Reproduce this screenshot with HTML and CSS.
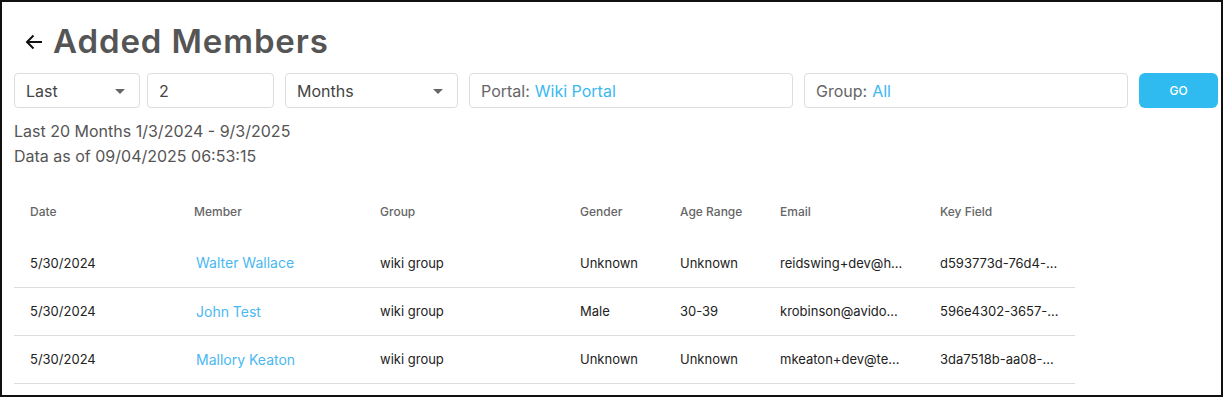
FILE: index.html
```html
<!DOCTYPE html>
<html lang="en">
<head>
  <meta charset="UTF-8">
  <title>Added Members</title>
  <link rel="stylesheet" href="styles.css">
</head>
<body>
  <div class="page">
    <!-- HEADER -->
    <div class="page-header">
      <a class="back" href="#">
        <svg width="18" height="16" viewBox="0 0 18 16"><path d="M17 8H2M8.5 1.5L2 8l6.5 6.5" fill="none" stroke="#111" stroke-width="2"/></svg>
      </a>
      <h1>Added Members</h1>
    </div>

    <!-- FILTERS -->
    <div class="filters">
      <div class="field select w-last">Last <span class="caret"></span></div>
      <div class="field w-num">2</div>
      <div class="field select w-unit">Months <span class="caret"></span></div>
      <div class="field w-wide"><span class="label">Portal:</span> <span class="value">Wiki Portal</span></div>
      <div class="field w-wide"><span class="label">Group:</span> <span class="value">All</span></div>
      <button class="go">GO</button>
    </div>

    <div class="summary">
      <div>Last 20 Months 1/3/2024 - 9/3/2025</div>
      <div>Data as of 09/04/2025 06:53:15</div>
    </div>

    <!-- TABLE -->
    <table class="members">
      <thead>
        <tr>
          <th class="c-date">Date</th>
          <th class="c-member">Member</th>
          <th class="c-group">Group</th>
          <th class="c-gender">Gender</th>
          <th class="c-age">Age Range</th>
          <th class="c-email">Email</th>
          <th class="c-key">Key Field</th>
        </tr>
      </thead>
      <tbody>
        <tr>
          <td>5/30/2024</td>
          <td><a href="#">Walter Wallace</a></td>
          <td>wiki group</td>
          <td>Unknown</td>
          <td>Unknown</td>
          <td>reidswing+dev@h...</td>
          <td>d593773d-76d4-...</td>
        </tr>
        <tr>
          <td>5/30/2024</td>
          <td><a href="#">John Test</a></td>
          <td>wiki group</td>
          <td>Male</td>
          <td>30-39</td>
          <td>krobinson@avido...</td>
          <td>596e4302-3657-...</td>
        </tr>
        <tr>
          <td>5/30/2024</td>
          <td><a href="#">Mallory Keaton</a></td>
          <td>wiki group</td>
          <td>Unknown</td>
          <td>Unknown</td>
          <td>mkeaton+dev@te...</td>
          <td>3da7518b-aa08-...</td>
        </tr>
      </tbody>
    </table>
  </div>
</body>
</html>
```

FILE: styles.css
```css
* {
  box-sizing: border-box;
}
body {
  margin: 0;
  font-family: Inter, "Noto Sans", sans-serif;
  color: #555;
  background: #fff;
}
.page {
  width: 1223px;
  height: 397px;
  border: 2px solid #111;
  padding: 0 0 0 12px;
  overflow: hidden;
}

/* HEADER */
.page-header {
  display: flex;
  align-items: center;
  gap: 10px;
  padding: 18px 0 0 11px;
  height: 60px;
}
.back {
  display: flex;
  margin-top: 2px;
}
.page-header h1 {
  margin: 0;
  font-size: 33px;
  font-weight: 600;
  color: #555;
  letter-spacing: 0.9px;
}

/* FILTERS */
.filters {
  display: flex;
  gap: 11px;
  margin-top: 11px;
  height: 35px;
}
.field {
  display: flex;
  align-items: center;
  border: 1px solid #ddd;
  border-radius: 4px;
  padding: 0 11px;
  font-size: 16px;
  color: #444;
  position: relative;
}
.field .label {
  color: #666;
  margin-right: 5px;
}
.field .value {
  color: #3ab8ef;
}
.w-last { width: 126px; }
.w-num { width: 127px; margin-left: -4px; }
.w-unit { width: 173px; }
.w-wide { width: 324px; }
.caret {
  position: absolute;
  right: 14px;
  top: 15px;
  border-left: 5px solid transparent;
  border-right: 5px solid transparent;
  border-top: 5px solid #666;
}
.go {
  width: 79px;
  border: 0;
  border-radius: 6px;
  background: #2fbbf0;
  color: #fff;
  font-family: inherit;
  font-size: 12px;
  font-weight: 500;
}

/* SUMMARY */
.summary {
  margin-top: 11px;
  font-size: 16px;
  line-height: 25px;
  color: #555;
}

/* TABLE */
.members {
  margin-top: 14px;
  border-collapse: collapse;
  width: 1061px;
  table-layout: fixed;
}
.members th {
  text-align: left;
  font-size: 12px;
  font-weight: 500;
  color: #666;
  padding: 0 0 0 16px;
  height: 56px;
}
.members td {
  font-size: 13px;
  color: #222;
  padding: 0 0 0 16px;
  height: 48px;
  border-bottom: 1px solid #ddd;
  white-space: nowrap;
}
.members td a {
  color: #4ab8f0;
  text-decoration: none;
  font-size: 14px;
  padding-left: 2px;
}
.c-date { width: 164px; }
.c-member { width: 186px; }
.c-group { width: 200px; }
.c-gender { width: 100px; }
.c-age { width: 100px; }
.c-email { width: 160px; }
.c-key { width: 151px; }
```
